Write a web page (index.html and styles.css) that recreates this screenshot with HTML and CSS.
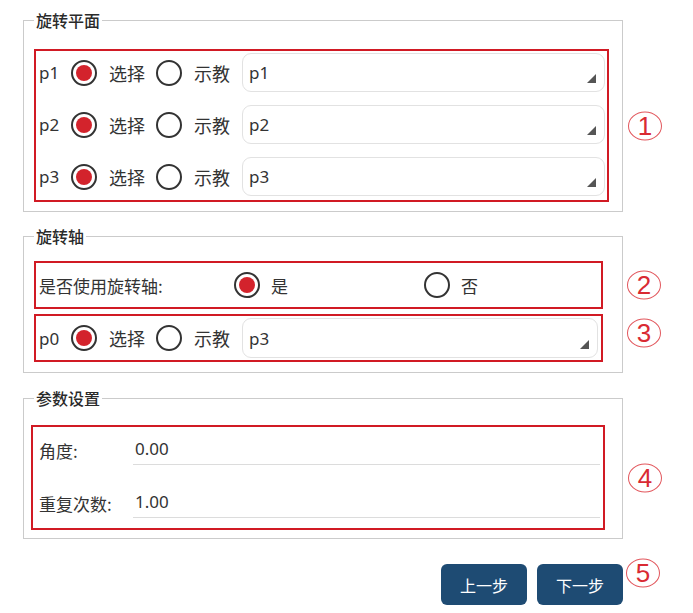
FILE: index.html
```html
<!DOCTYPE html>
<html lang="zh-CN">
<head>
<meta charset="utf-8">
<title>旋转</title>
<link rel="stylesheet" href="styles.css">
</head>
<body>
<div class="page">
  <fieldset class="group g1">
    <legend>旋转平面</legend>
    <div class="mark box1">
      <div class="pt-row">
        <span class="pt">p1</span>
        <span class="radio on"></span><span class="opt">选择</span>
        <span class="radio"></span><span class="opt">示教</span>
        <div class="combo"><span>p1</span><span class="arrow"></span></div>
      </div>
      <div class="pt-row">
        <span class="pt">p2</span>
        <span class="radio on"></span><span class="opt">选择</span>
        <span class="radio"></span><span class="opt">示教</span>
        <div class="combo"><span>p2</span><span class="arrow"></span></div>
      </div>
      <div class="pt-row">
        <span class="pt">p3</span>
        <span class="radio on"></span><span class="opt">选择</span>
        <span class="radio"></span><span class="opt">示教</span>
        <div class="combo"><span>p3</span><span class="arrow"></span></div>
      </div>
      <span class="annot a1">1</span>
    </div>
  </fieldset>

  <fieldset class="group g2">
    <legend>旋转轴</legend>
    <div class="mark box2">
      <span class="axis-label">是否使用旋转轴:</span>
      <span class="choice"><span class="radio on"></span><span class="opt">是</span></span>
      <span class="choice last"><span class="radio"></span><span class="opt">否</span></span>
      <span class="annot a2">2</span>
    </div>
    <div class="mark box3">
      <div class="pt-row">
        <span class="pt">p0</span>
        <span class="radio on"></span><span class="opt">选择</span>
        <span class="radio"></span><span class="opt">示教</span>
        <div class="combo tall"><span>p3</span><span class="arrow"></span></div>
      </div>
      <span class="annot a3">3</span>
    </div>
  </fieldset>

  <fieldset class="group g3">
    <legend>参数设置</legend>
    <div class="mark box4">
      <div class="param">
        <span class="param-label">角度:</span>
        <span class="param-input">0.00</span>
      </div>
      <div class="param">
        <span class="param-label">重复次数:</span>
        <span class="param-input">1.00</span>
      </div>
      <span class="annot a4">4</span>
    </div>
  </fieldset>

  <div class="actions">
    <button class="btn">上一步</button>
    <button class="btn">下一步</button>
    <span class="annot a5">5</span>
  </div>
</div>
</body>
</html>
```

FILE: styles.css
```css
* { box-sizing: border-box; }
html, body { margin: 0; padding: 0; background: #fff; }
body {
  font-family: "Noto Sans", "Noto Sans CJK SC", sans-serif;
  color: #333;
  font-size: 17px;
}
.page {
  width: 623px;
  padding: 10px 0 0 23px;
}
.group {
  margin: 0;
  width: 600px;
  border: 1px solid #cbcbcb;
  padding: 0 13px 9px 10px;
  min-width: 0;
}
.group legend {
  font-family: "Noto Sans CJK SC", sans-serif;
  font-size: 16px;
  line-height: 20px;
  padding: 0 2px;
  color: #2a2a2a;
  font-weight: 500;
}
.g1 { padding-top: 19px; }
.g2 { margin-top: 14px; padding-top: 15px; padding-bottom: 10px; }
.g3 { margin-top: 15px; padding-top: 17px; padding-bottom: 8px; }

.mark {
  position: relative;
  border: 2px solid #d11a24;
}
.box1 {
  display: flex;
  flex-direction: column;
  gap: 13px;
  padding: 2px 2px 4px 3px;
}
.box2 {
  height: 48px;
  margin-right: 6px;
  display: flex;
  align-items: center;
  padding-left: 3px;
}
.box3 {
  margin-top: 5px;
  margin-right: 6px;
  padding: 2px 3px 2px 3px;
}
.box4 {
  margin-left: -3px;
  margin-right: 4px;
  padding: 9px 3px 10px 6px;
  display: flex;
  flex-direction: column;
  gap: 24px;
}

.pt-row {
  display: flex;
  align-items: center;
}
.pt {
  width: 22px;
  margin-right: 10px;
  font-size: 17px;
}
.radio {
  width: 26px;
  height: 26px;
  border: 2px solid #333;
  border-radius: 50%;
  display: flex;
  align-items: center;
  justify-content: center;
  flex: none;
}
.radio.on::after {
  content: "";
  width: 16px;
  height: 16px;
  border-radius: 50%;
  background: #d3232c;
}
.opt {
  font-family: "Noto Sans CJK SC", sans-serif;
  font-size: 18px;
  margin-left: 12px;
  margin-right: 11px;
}
.pt-row .opt + .radio + .opt { margin-right: 12px; }
.combo {
  flex: 1;
  height: 39px;
  border: 1px solid #e2e2e2;
  border-radius: 9px;
  display: flex;
  align-items: center;
  justify-content: space-between;
  padding: 0 8px 0 6px;
  font-size: 17px;
  position: relative;
}
.combo.tall { height: 40px; }
.arrow {
  width: 0;
  height: 0;
  border-left: 9px solid transparent;
  border-bottom: 9px solid #555;
  align-self: flex-end;
  margin-bottom: 8px;
}

.axis-label {
  font-family: "Noto Sans CJK SC", sans-serif;
  width: 195px;
  flex: none;
  font-size: 17px;
}
.choice {
  display: flex;
  align-items: center;
  width: 190px;
  flex: none;
}
.choice.last { width: auto; }
.choice .opt {
  margin-left: 11px;
  font-size: 17px;
}

.param {
  display: flex;
  align-items: flex-end;
}
.param-label {
  font-family: "Noto Sans CJK SC", sans-serif;
  width: 98px;
  font-size: 17px;
  line-height: 28px;
}
.param-input {
  flex: 1;
  height: 29px;
  border-bottom: 1px solid #dcdcdc;
  font-size: 17px;
  line-height: 26px;
  padding-left: 2px;
  margin-left: -4px;
}

.actions {
  position: relative;
  margin-top: 25px;
  width: 600px;
  display: flex;
  justify-content: flex-end;
  gap: 10px;
}
.btn {
  width: 86px;
  height: 41px;
  border: none;
  border-radius: 6px;
  background: #1e4b73;
  color: #fff;
  font-family: "Noto Sans CJK SC", sans-serif;
  font-size: 16px;
  padding: 0;
}

.annot {
  position: absolute;
  width: 34px;
  height: 29px;
  border: 1px solid #e2575d;
  border-radius: 50%;
  color: #d92a33;
  font-family: "Liberation Sans", sans-serif;
  font-size: 26px;
  line-height: 27px;
  text-align: center;
  top: 50%;
  transform: translateY(-50%);
}
.a1 { right: -55px; }
.a2 { right: -60px; }
.a3 { right: -60px; top: calc(50% - 5px); }
.a4 { right: -59px; }
.a5 { right: -37px; top: calc(50% - 12px); }
```
